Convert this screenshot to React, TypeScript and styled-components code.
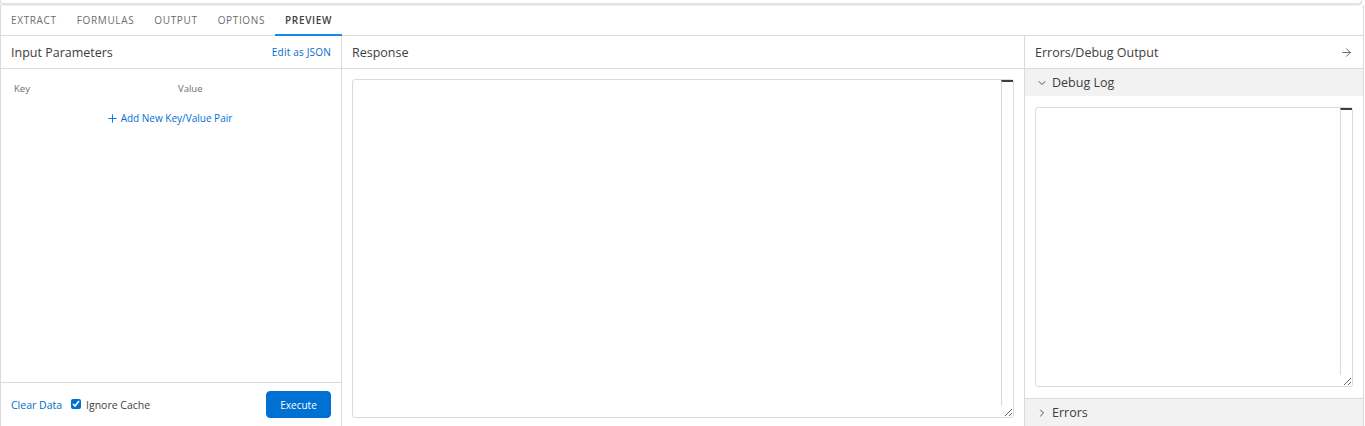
import React, { useState } from 'react';
import styled, { createGlobalStyle } from 'styled-components';
import { ChevronDown, ChevronRight, ArrowRight, Plus } from 'lucide-react';

const GlobalStyle = createGlobalStyle`
  html, body, #root {
    height: 100%;
  }
  body {
    margin: 0;
    background: #ffffff;
    font-family: "Open Sans", "Noto Sans", Arial, sans-serif;
    color: #3e3e3c;
  }
  * {
    box-sizing: border-box;
  }
`;

const Page = styled.div`
  display: flex;
  flex-direction: column;
  height: 100%;
  width: 1364px;
`;

const TopCard = styled.div`
  height: 4px;
  margin-right: 2px;
  background: #fff;
  border-radius: 0 0 4px 4px;
  box-shadow: 0 1px 2px rgba(0, 0, 0, 0.18);
  border: 1px solid #e5e5e5;
  border-top: none;
  flex-shrink: 0;
`;

const Frame = styled.div`
  flex: 1;
  display: flex;
  flex-direction: column;
  border-left: 1px solid #dddbda;
  border-right: 1px solid #dddbda;
  min-height: 0;
  margin-top: 1px;
`;

const TabBar = styled.div`
  display: flex;
  height: 31px;
  border-bottom: 1px solid #dddbda;
  flex-shrink: 0;
`;

const Tab = styled.div<{ active?: boolean }>`
  display: flex;
  align-items: center;
  padding: 1px 10px 0;
  font-family: "Open Sans", sans-serif;
  font-size: 10px;
  letter-spacing: 0.65px;
  text-transform: uppercase;
  color: ${p => (p.active ? '#3e3e3c' : '#6b6d70')};
  font-weight: ${p => (p.active ? 600 : 400)};
  border-bottom: 2px solid ${p => (p.active ? '#1589ee' : 'transparent')};
  margin-bottom: -1px;
  cursor: pointer;
`;

const Body = styled.div`
  flex: 1;
  display: flex;
  min-height: 0;
`;

const Panel = styled.div<{ width?: number; grow?: boolean }>`
  display: flex;
  flex-direction: column;
  width: ${p => (p.width ? `${p.width}px` : 'auto')};
  flex: ${p => (p.grow ? 1 : 'none')};
  border-right: ${p => (p.grow ? '1px solid #dddbda' : 'none')};
  min-height: 0;
`;

const LeftPanel = styled(Panel)`
  border-right: 1px solid #dddbda;
`;

const PanelHeader = styled.div`
  display: flex;
  align-items: center;
  justify-content: space-between;
  height: 33px;
  padding: 0 10px 0 10px;
  border-bottom: 1px solid #dddbda;
  font-size: 12.5px;
  color: #3e3e3c;
  flex-shrink: 0;
`;

const HeaderLink = styled.a`
  font-size: 10px;
  color: #006dcc;
  cursor: pointer;
  letter-spacing: 0.2px;
`;

const ParamBody = styled.div`
  flex: 1;
  padding: 13px 0 0;
`;

const ParamColumns = styled.div`
  display: grid;
  grid-template-columns: 164px 1fr;
  padding: 0 13px;
  font-size: 9.5px;
  color: #706e6b;
`;

const AddPair = styled.div`
  display: flex;
  align-items: center;
  justify-content: center;
  gap: 2px;
  margin-top: 16px;
  padding-right: 4px;
  font-size: 10px;
  color: #0070d2;
  cursor: pointer;
`;

const Footer = styled.div`
  display: flex;
  align-items: center;
  height: 44px;
  padding: 0 10px 0 10px;
  border-top: 1px solid #dddbda;
  font-size: 10.5px;
  flex-shrink: 0;
`;

const FooterLink = styled.a`
  color: #006dcc;
  margin-right: 9px;
  cursor: pointer;
`;

const CheckLabel = styled.label`
  display: flex;
  align-items: center;
  gap: 5px;
  color: #3e3e3c;
  font-size: 10.5px;
`;

const Check = styled.input`
  width: 10px;
  height: 10px;
  margin: 0 0 2px;
  accent-color: #0070d2;
`;

const Spacer = styled.div`
  flex: 1;
`;

const ExecuteButton = styled.button`
  width: 65px;
  height: 27px;
  background: #0070d2;
  border: 1px solid #0070d2;
  border-radius: 4px;
  color: #fff;
  font-family: "Open Sans", sans-serif;
  font-size: 10px;
  cursor: pointer;
`;

const TextWrap = styled.div<{ margin: string }>`
  position: relative;
  flex: 1;
  display: flex;
  margin: ${p => p.margin};
  min-height: 0;
`;

const TextBox = styled.textarea`
  flex: 1;
  border: 1px solid #dddbda;
  border-radius: 3px;
  resize: vertical;
  overflow: hidden;
  background: #fff;
  font-family: "Liberation Mono", monospace;
  font-size: 11px;
  outline: none;
  padding: 4px 16px 4px 6px;
`;

/* scrollbar stub drawn over the textarea's right edge */
const ScrollTrack = styled.div`
  position: absolute;
  top: 1px;
  right: 1px;
  bottom: 12px;
  width: 12px;
  border-left: 1px solid #d8d8d8;
  border-top: 2px solid #3e3e3c;
  pointer-events: none;
`;

const SectionHeader = styled.div`
  display: flex;
  align-items: center;
  gap: 4px;
  height: 27px;
  padding: 0 11px;
  background: #f3f2f2;
  font-size: 12.5px;
  color: #3e3e3c;
  flex-shrink: 0;
  cursor: pointer;
`;

const SectionBody = styled.div`
  flex: 1;
  display: flex;
  flex-direction: column;
  border-bottom: 1px solid #dddbda;
  min-height: 0;
`;

const tabs = ['Extract', 'Formulas', 'Output', 'Options', 'Preview'];

function ScrollText({ margin }: { margin: string }) {
  return (
    <TextWrap margin={margin}>
      <TextBox readOnly />
      <ScrollTrack />
    </TextWrap>
  );
}

export default function App() {
  const [active, setActive] = useState('Preview');
  const [ignoreCache, setIgnoreCache] = useState(true);

  return (
    <>
      <GlobalStyle />
      <Page>
        <TopCard />
        <Frame>
          <TabBar>
            {tabs.map(t => (
              <Tab key={t} active={t === active} onClick={() => setActive(t)}>
                {t}
              </Tab>
            ))}
          </TabBar>
          <Body>
            <LeftPanel width={341}>
              <PanelHeader>
                <span>Input Parameters</span>
                <HeaderLink>Edit as JSON</HeaderLink>
              </PanelHeader>
              <ParamBody>
                <ParamColumns>
                  <span>Key</span>
                  <span>Value</span>
                </ParamColumns>
                <AddPair>
                  <Plus size={13} strokeWidth={1.7} />
                  Add New Key/Value Pair
                </AddPair>
              </ParamBody>
              <Footer>
                <FooterLink>Clear Data</FooterLink>
                <CheckLabel>
                  <Check
                    type="checkbox"
                    checked={ignoreCache}
                    onChange={e => setIgnoreCache(e.target.checked)}
                  />
                  Ignore Cache
                </CheckLabel>
                <Spacer />
                <ExecuteButton>Execute</ExecuteButton>
              </Footer>
            </LeftPanel>

            <Panel grow>
              <PanelHeader>
                <span>Response</span>
              </PanelHeader>
              <ScrollText margin="10px 10px 8px 10px" />
            </Panel>

            <Panel width={338}>
              <PanelHeader>
                <span>Errors/Debug Output</span>
                <ArrowRight size={13} strokeWidth={1.4} color="#3e3e3c" />
              </PanelHeader>
              <SectionHeader>
                <ChevronDown size={12} strokeWidth={1.8} />
                Debug Log
              </SectionHeader>
              <SectionBody>
                <ScrollText margin="11px 10px 11px 10px" />
              </SectionBody>
              <SectionHeader>
                <ChevronRight size={12} strokeWidth={1.8} />
                Errors
              </SectionHeader>
            </Panel>
          </Body>
        </Frame>
      </Page>
    </>
  );
}
